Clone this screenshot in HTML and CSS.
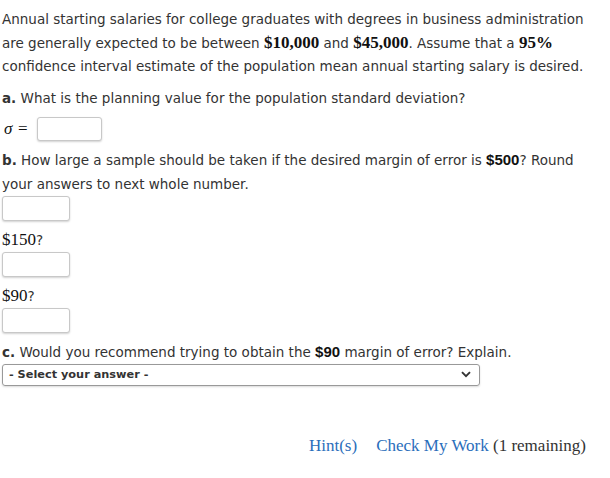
FILE: index.html
```html
<!DOCTYPE html>
<html>
<head>
<meta charset="utf-8">
<link rel="stylesheet" href="styles.css">
</head>
<body>
<div class="problem">
  <p class="intro">Annual starting salaries for college graduates with degrees in business administration are generally expected to be between <span class="math">$10,000</span> and <span class="math">$45,000</span>. Assume that a <span class="math">95%</span> confidence interval estimate of the population mean annual starting salary is desired.</p>

  <p class="q"><b>a.</b> What is the planning value for the population standard deviation?</p>
  <div class="sigma-row"><span class="math sigma">σ</span><span class="math eq">=</span><span class="box sbox"></span></div>

  <p class="q"><b>b.</b> How large a sample should be taken if the desired margin of error is <span class="bold-num">$500</span>? Round your answers to next whole number.</p>
  <div class="box-row"><span class="box"></span></div>
  <div class="label"><span class="math">$150</span>?</div>
  <div class="box-row"><span class="box"></span></div>
  <div class="label"><span class="math">$90</span>?</div>
  <div class="box-row"><span class="box"></span></div>

  <p class="q"><b>c.</b> Would you recommend trying to obtain the <span class="bold-num">$90</span> margin of error? Explain.</p>
  <div class="select">
    <span class="select-text">- Select your answer -</span>
    <svg class="chev" width="10" height="7" viewBox="0 0 10 7"><path d="M1 1.2 L5 5.2 L9 1.2" fill="none" stroke="#333" stroke-width="1.9"/></svg>
  </div>

  <div class="actions">
    <a class="link">Hint(s)</a>
    <span class="check"><a class="link">Check My Work</a> (1 remaining)</span>
  </div>
</div>
</body>
</html>
```
FILE: styles.css
```css
html, body {
  margin: 0;
  padding: 0;
  background: #fff;
}
body {
  font-family: "DejaVu Sans", Verdana, sans-serif;
  font-size: 13.5px;
  color: #333;
}
.problem {
  padding: 8px 2px 0 2px;
  width: 600px;
}
p {
  margin: 0;
  line-height: 24px;
}
.intro {
  line-height: 23.5px;
  margin-bottom: 7px;
}
.math {
  font-family: "Liberation Serif", "DejaVu Serif", serif;
  font-size: 17px;
  color: #111;
  line-height: 1;
}
.intro .math {
  font-weight: bold;
}
.bold-num {
  font-family: "Liberation Sans", Arial, sans-serif;
  font-weight: bold;
  font-size: 15px;
  color: #111;
  line-height: 1;
}
.sigma-row {
  display: flex;
  align-items: center;
  margin: 7px 0 7px 0;
}
.sigma {
  font-style: italic;
  padding-left: 2px;
  width: 14px;
}
.eq {
  width: 19px;
}
.box {
  display: inline-block;
  width: 66px;
  height: 23px;
  border: 1px solid #c8c8c8;
  border-radius: 3px;
  box-shadow: 0 1px 2px rgba(0,0,0,0.18);
  background: #fff;
}
.sbox {
  width: 63px;
  height: 22px;
}
.box-row {
  display: flex;
  margin: 0 0 7px 0;
}
.label {
  line-height: 24px;
  color: #333;
}
.select {
  width: 478px;
  height: 22px;
  box-sizing: border-box;
  border: 1px solid #999;
  border-radius: 3px;
  display: flex;
  align-items: center;
  justify-content: space-between;
  padding: 0 8px 0 6px;
  box-shadow: 0 1px 2px rgba(0,0,0,0.15);
}
.select-text {
  font-weight: bold;
  font-size: 11.3px;
  color: #333;
}
.actions {
  margin-top: 50px;
  display: flex;
  justify-content: flex-end;
  gap: 19px;
  padding-right: 16px;
  font-family: "Liberation Serif", Georgia, serif;
  font-size: 17px;
  line-height: 20px;
}
.link {
  color: #2a6ebb;
}
.check {
  color: #333;
}
```
